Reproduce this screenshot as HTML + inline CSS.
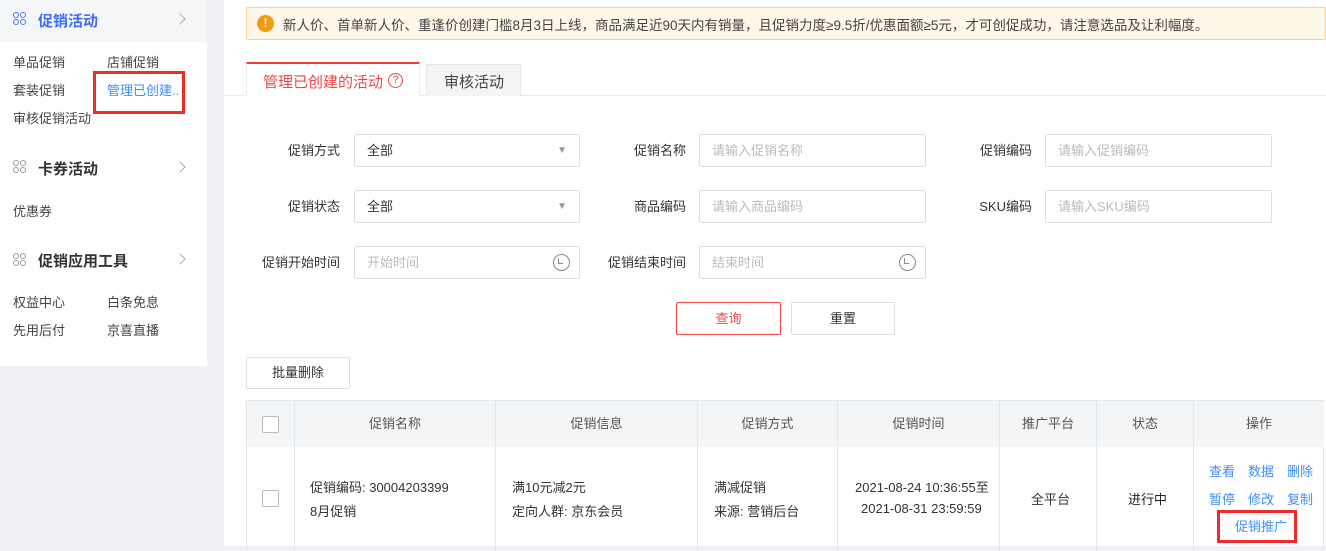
<!DOCTYPE html>
<html><head><meta charset="utf-8"><style>
*{box-sizing:border-box;margin:0;padding:0}
body{width:1326px;height:546px;overflow:hidden;background:#eff1f4;font-family:"Liberation Sans","Noto Sans CJK SC",sans-serif;font-size:13px;color:#333;position:relative}
.a{position:absolute;white-space:nowrap}
.side{position:absolute;left:0;top:0;width:207px;height:366px;background:#fff;color:#444}
.sh{position:absolute;left:0;width:207px;height:42px;font-size:15px;font-weight:bold;color:#333}
.ico{position:absolute;left:13px;width:13px;height:13px}
.ico i{position:absolute;width:6px;height:6px;border:1.3px solid #999;border-radius:50%}
.chev{position:absolute;left:176px;width:8px;height:8px;border-top:1.3px solid #aaa;border-right:1.3px solid #aaa;transform:rotate(45deg)}
.main{position:absolute;left:224px;top:0;width:1102px;height:546px;background:#fff}
.inp{position:absolute;height:33px;border:1px solid #dcdfe6;border-radius:2px;padding-left:12px;line-height:31px;color:#bbb;font-size:13px}
.lbl{position:absolute;text-align:right;width:90px;line-height:33px;color:#333}
.tbl{position:absolute;left:246px;top:400px;width:1078px;height:150px;border:1px solid #e3e6eb;border-bottom:none}
.th{position:absolute;top:0;height:46px;line-height:46px;text-align:center;background:#f4f5f7;border-right:1px solid #e3e6eb;color:#555}
.td{position:absolute;top:46px;height:104px;border-right:1px solid #e3e6eb}
.cb{position:absolute;width:17px;height:17px;border:1px solid #bbb;border-radius:2px;background:#fff}
.blue{color:#3f8cff}
</style></head><body>
<div class="side">
 <div class="sh" style="top:0;background:#f5f6f8;color:#3f6df5">
  <div class="ico" style="top:12px"><i style="left:0;top:0;border-color:#4a74f5"></i><i style="left:7px;top:0;border-color:#4a74f5"></i><i style="left:0;top:7px;border-color:#4a74f5"></i><i style="left:7px;top:7px;border-color:#4a74f5"></i></div>
  <span class="a" style="left:38px;top:10px">促销活动</span><div class="chev" style="top:15px"></div></div>
 <span class="a" style="left:13px;top:52px">单品促销</span><span class="a" style="left:107px;top:52px">店铺促销</span>
 <span class="a" style="left:13px;top:80px">套装促销</span><span class="a blue" style="left:107px;top:80px">管理已创建..</span>
 <div class="a" style="left:93px;top:71px;width:92px;height:43px;border:3px solid #ee2a2a"></div>
 <span class="a" style="left:13px;top:108px">审核促销活动</span>
 <div class="sh" style="top:147px">
  <div class="ico" style="top:13px"><i style="left:0;top:0"></i><i style="left:7px;top:0"></i><i style="left:0;top:7px"></i><i style="left:7px;top:7px"></i></div>
  <span class="a" style="left:38px;top:11px">卡券活动</span><div class="chev" style="top:16px"></div></div>
 <span class="a" style="left:13px;top:201px">优惠券</span>
 <div class="sh" style="top:240px">
  <div class="ico" style="top:13px"><i style="left:0;top:0"></i><i style="left:7px;top:0"></i><i style="left:0;top:7px"></i><i style="left:7px;top:7px"></i></div>
  <span class="a" style="left:38px;top:10px">促销应用工具</span><div class="chev" style="top:15px"></div></div>
 <span class="a" style="left:13px;top:292px">权益中心</span><span class="a" style="left:107px;top:292px">白条免息</span>
 <span class="a" style="left:13px;top:320px">先用后付</span><span class="a" style="left:107px;top:320px">京喜直播</span>
</div>
<div class="main"></div>
<div class="a" style="left:246px;top:7px;width:1080px;height:33px;background:#fff7e8;border:1px solid #fbd08a;border-radius:2px"></div>
<div class="a" style="left:257px;top:15px;width:17px;height:17px;border-radius:50%;background:#f59a0d;color:#fff;font-weight:bold;text-align:center;line-height:17px;font-size:12px">!</div>
<span class="a" style="left:283px;top:14px;font-size:13.5px;color:#444">新人价、首单新人价、重逢价创建门槛8月3日上线，商品满足近90天内有销量，且促销力度≥9.5折/优惠面额≥5元，才可创促成功，请注意选品及让利幅度。</span>
<div class="a" style="left:224px;top:95px;width:1102px;height:1px;background:#e8eaee"></div>
<div class="a" style="left:246px;top:62px;width:174px;height:34px;background:#fff;border-top:2px solid #f23a3a;border-left:1px solid #eee;border-right:1px solid #eee"></div>
<span class="a" style="left:263px;top:71px;font-size:15px;color:#f04545">管理已创建的活动</span>
<div class="a" style="left:388px;top:73px;width:15px;height:15px;border:1px solid #f04545;border-radius:50%;color:#f04545;font-size:11px;text-align:center;line-height:13px">?</div>
<div class="a" style="left:426px;top:64px;width:95px;height:32px;background:#f4f5f7;border:1px solid #e6e8eb;border-bottom:none"></div>
<span class="a" style="left:444px;top:71px;font-size:15px;color:#444">审核活动</span>

<div class="lbl" style="left:250px;top:134px">促销方式</div>
<div class="inp" style="left:354px;top:134px;width:226px;color:#333">全部<span class="a" style="right:12px;top:0;color:#999;font-size:10px">▼</span></div>
<div class="lbl" style="left:596px;top:134px">促销名称</div>
<div class="inp" style="left:699px;top:134px;width:227px">请输入促销名称</div>
<div class="lbl" style="left:942px;top:134px">促销编码</div>
<div class="inp" style="left:1045px;top:134px;width:227px">请输入促销编码</div>
<div class="lbl" style="left:250px;top:190px">促销状态</div>
<div class="inp" style="left:354px;top:190px;width:226px;color:#333">全部<span class="a" style="right:12px;top:0;color:#999;font-size:10px">▼</span></div>
<div class="lbl" style="left:596px;top:190px">商品编码</div>
<div class="inp" style="left:699px;top:190px;width:227px">请输入商品编码</div>
<div class="lbl" style="left:942px;top:190px">SKU编码</div>
<div class="inp" style="left:1045px;top:190px;width:227px">请输入SKU编码</div>
<div class="lbl" style="left:250px;top:246px">促销开始时间</div>
<div class="inp" style="left:354px;top:246px;width:226px">开始时间<span class="a" style="right:9px;top:7px;width:17px;height:17px;border:1.3px solid #888;border-radius:50%"></span><span class="a" style="right:16px;top:11px;width:5px;height:6px;border-left:1.3px solid #888;border-bottom:1.3px solid #888"></span></div>
<div class="lbl" style="left:596px;top:246px">促销结束时间</div>
<div class="inp" style="left:699px;top:246px;width:227px">结束时间<span class="a" style="right:9px;top:7px;width:17px;height:17px;border:1.3px solid #888;border-radius:50%"></span><span class="a" style="right:16px;top:11px;width:5px;height:6px;border-left:1.3px solid #888;border-bottom:1.3px solid #888"></span></div>

<div class="a" style="left:676px;top:302px;width:105px;height:33px;border:1px solid #f04545;color:#f04545;text-align:center;line-height:31px;border-radius:2px">查询</div>
<div class="a" style="left:791px;top:302px;width:104px;height:33px;border:1px solid #dcdfe6;text-align:center;line-height:31px;border-radius:2px">重置</div>
<div class="a" style="left:246px;top:357px;width:104px;height:32px;border:1px solid #dcdfe6;text-align:center;line-height:30px;border-radius:2px">批量删除</div>

<div class="tbl">
 <div class="th" style="left:0;width:48px"></div>
 <div class="th" style="left:48px;width:201px">促销名称</div>
 <div class="th" style="left:249px;width:202px">促销信息</div>
 <div class="th" style="left:451px;width:140px">促销方式</div>
 <div class="th" style="left:591px;width:162px">促销时间</div>
 <div class="th" style="left:753px;width:97px">推广平台</div>
 <div class="th" style="left:850px;width:97px">状态</div>
 <div class="th" style="left:947px;width:130px;border-right:none">操作</div>
 <div class="td" style="left:0;width:48px"></div><div class="td" style="left:48px;width:201px"></div><div class="td" style="left:249px;width:202px"></div><div class="td" style="left:451px;width:140px"></div><div class="td" style="left:591px;width:162px"></div><div class="td" style="left:753px;width:97px"></div><div class="td" style="left:850px;width:97px"></div>
</div>
<div class="cb" style="left:262px;top:416px"></div>
<div class="cb" style="left:262px;top:490px"></div>
<span class="a" style="left:310px;top:477px">促销编码: 30004203399</span>
<span class="a" style="left:310px;top:501px">8月促销</span>
<span class="a" style="left:512px;top:477px">满10元减2元</span>
<span class="a" style="left:512px;top:501px">定向人群: 京东会员</span>
<span class="a" style="left:714px;top:477px">满减促销</span>
<span class="a" style="left:714px;top:501px">来源: 营销后台</span>
<span class="a" style="left:855px;top:477px">2021-08-24 10:36:55至</span>
<span class="a" style="left:861px;top:501px">2021-08-31 23:59:59</span>
<span class="a" style="left:1031px;top:489px">全平台</span>
<span class="a" style="left:1128px;top:489px;color:#222">进行中</span>
<span class="a blue" style="left:1209px;top:461px">查看</span><span class="a blue" style="left:1248px;top:461px">数据</span><span class="a blue" style="left:1287px;top:461px">删除</span>
<span class="a blue" style="left:1209px;top:489px">暂停</span><span class="a blue" style="left:1248px;top:489px">修改</span><span class="a blue" style="left:1287px;top:489px">复制</span>
<span class="a blue" style="left:1235px;top:516px">促销推广</span>
<div class="a" style="left:1217px;top:510px;width:80px;height:33px;border:3px solid #ee2a2a"></div>
</body></html>
